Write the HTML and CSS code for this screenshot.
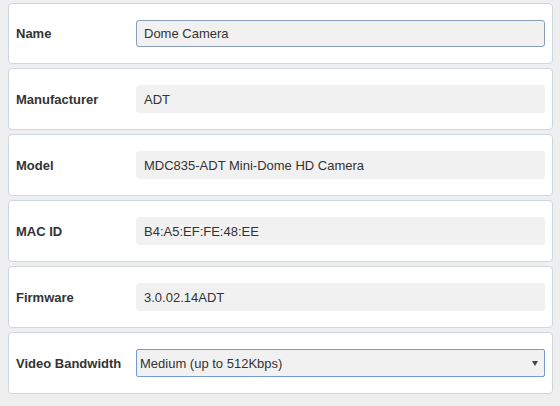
FILE: index.html
```html
<!DOCTYPE html>
<html>
<head>
<meta charset="utf-8">
<link rel="stylesheet" href="styles.css">
</head>
<body>
<div class="form">
  <div class="card">
    <div class="label">Name</div>
    <input class="field edit" type="text" value="Dome Camera">
  </div>
  <div class="card">
    <div class="label">Manufacturer</div>
    <div class="field ro">ADT</div>
  </div>
  <div class="card">
    <div class="label">Model</div>
    <div class="field ro">MDC835-ADT Mini-Dome HD Camera</div>
  </div>
  <div class="card">
    <div class="label">MAC ID</div>
    <div class="field ro">B4:A5:EF:FE:48:EE</div>
  </div>
  <div class="card">
    <div class="label">Firmware</div>
    <div class="field ro">3.0.02.14ADT</div>
  </div>
  <div class="card">
    <div class="label">Video Bandwidth</div>
    <div class="field sel"><span>Medium (up to 512Kbps)</span><span class="arrow"></span></div>
  </div>
</div>
</body>
</html>
```
FILE: styles.css
```css
html, body {
  margin: 0;
  padding: 0;
  background: #efefef;
}
body {
  font-family: "Liberation Sans", Arial, sans-serif;
  font-size: 13px;
  color: #333;
}
.form {
  padding: 3px 7px 0 8px;
  display: flex;
  flex-direction: column;
  gap: 4px;
}
.card {
  display: flex;
  align-items: center;
  background: #fff;
  border: 1px solid #cfd6de;
  border-radius: 4px;
  padding: 16px 7px;
}
.label {
  width: 120px;
  flex: none;
  font-weight: bold;
  color: #333;
}
.field {
  box-sizing: border-box;
  flex: 1;
  height: 28px;
  background: #f1f1f1;
  border-radius: 3px;
  font-family: "Liberation Sans", Arial, sans-serif;
  font-size: 13px;
  color: #333;
  display: flex;
  align-items: center;
  padding: 0 7px;
  margin: 0;
}
.ro {
  border: 1px solid #f1f1f1;
}
.edit {
  border: 1px solid #8a9eb7;
  outline: none;
  height: 27px;
}
.sel {
  border: 1px solid #7799d4;
  border-radius: 2px;
  justify-content: space-between;
  padding: 0 4px 0 3px;
}
.arrow {
  width: 0;
  height: 0;
  border-left: 3px solid transparent;
  border-right: 3px solid transparent;
  border-top: 5px solid #444;
  margin-right: 2px;
}
```
